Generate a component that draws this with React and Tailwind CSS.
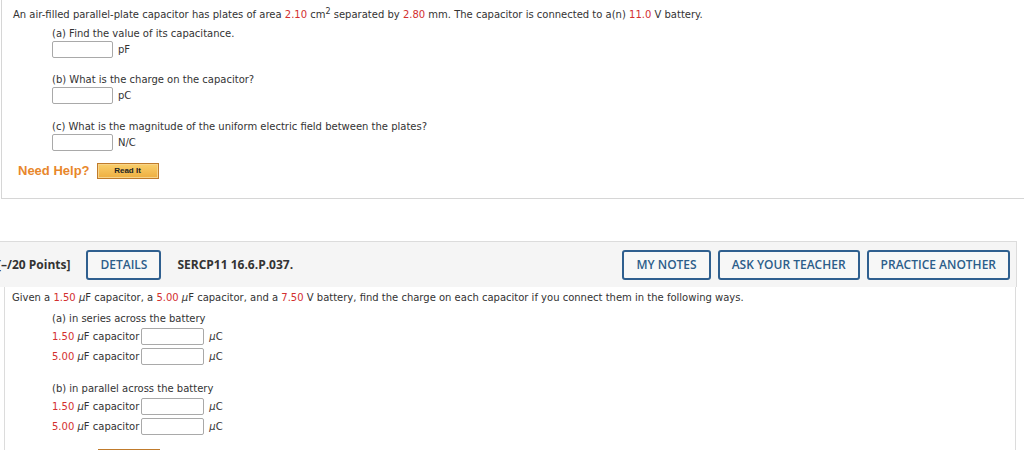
const red = "text-[#d32f2f]";

function Box({ w = "w-[61px]" }) {
  return <span className={`inline-block ${w} h-[17px] border border-[#a9a9a9] rounded-[2px] bg-white align-middle`} />;
}

function Answer({ unit }) {
  return (
    <div className="flex items-center gap-[5px] h-[17px]">
      <Box />
      <span>{unit}</span>
    </div>
  );
}

function CapRow({ value }) {
  return (
    <div className="flex items-center h-[17px]">
      <span className={red}>{value}</span>
      <span>&nbsp;<i>μ</i>F capacitor</span>
      <span className="ml-[2px]"><Box w="w-[63px]" /></span>
      <span className="ml-[5px]"><i>μ</i>C</span>
    </div>
  );
}

function HeadButton({ children }) {
  return (
    <button className="h-[30px] px-[12px] border-2 border-[#2f5f8f] rounded-[3px] text-[#2c5d8a] font-semibold text-[12px] bg-[#f7f7f7] leading-none">
      {children}
    </button>
  );
}

export default function App() {
  const body = "font-['DejaVu_Sans',Verdana,sans-serif] text-[10px] text-[#333]";
  return (
    <div className="w-[1024px] h-[450px] overflow-hidden bg-white relative">
      <section className={`ml-[1px] h-[199px] border-l border-b border-[#d6d6d6] ${body}`}>
        <p className="pt-[9px] pl-[11px] leading-[12px]">
          An air-filled parallel-plate capacitor has plates of area <span className={red}>2.10</span> cm<sup className="text-[8px]">2</sup> separated by <span className={red}>2.80</span> mm. The capacitor is connected to a(n) <span className={red}>11.0</span> V battery.
        </p>
        <div className="pl-[50px]">
          <p className="mt-[7px] leading-[12px]">(a) Find the value of its capacitance.</p>
          <div className="mt-[1px]"><Answer unit="pF" /></div>
          <p className="mt-[16px] leading-[12px]">(b) What is the charge on the capacitor?</p>
          <div className="mt-[1px]"><Answer unit="pC" /></div>
          <p className="mt-[17px] leading-[12px]">(c) What is the magnitude of the uniform electric field between the plates?</p>
          <div className="mt-[1px]"><Answer unit="N/C" /></div>
        </div>
        <div className="flex items-center mt-[10px] pl-[16px]">
          <span className="font-['Liberation_Sans',Arial,sans-serif] font-bold text-[13px] text-[#e8872b]">Need Help?</span>
          <span className="ml-[7px] w-[62px] h-[16px] border border-[#c07b2c] bg-gradient-to-b from-[#f9cf6b] to-[#eeae3f] flex items-center justify-center font-['Liberation_Sans',Arial,sans-serif] font-bold text-[8px] text-[#222] shadow-[inset_0_0_0_1px_#f7d48a]">
            Read It
          </span>
        </div>
      </section>

      <div className="mt-[42px] w-[1017px] font-['Open_Sans',sans-serif]">
        <div className="h-[46px] bg-[#f5f5f5] border-t border-r border-[#dcdcdc] flex items-center">
          <span className="-ml-[3px] font-bold text-[12px] text-[#333]">[–/20 Points]</span>
          <span className="ml-[16px]"><HeadButton>DETAILS</HeadButton></span>
          <span className="ml-[16px] font-bold text-[12px] text-[#333]">SERCP11 16.6.P.037.</span>
          <div className="ml-auto mr-[6px] flex gap-[7px]">
            <HeadButton>MY NOTES</HeadButton>
            <HeadButton>ASK YOUR TEACHER</HeadButton>
            <HeadButton>PRACTICE ANOTHER</HeadButton>
          </div>
        </div>
        <div className={`ml-[4px] mr-[1px] h-[200px] border-l border-r border-[#dcdcdc] ${body}`}>
          <p className="pt-[5px] pl-[7px] leading-[12px]">
            Given a <span className={red}>1.50</span> <i>μ</i>F capacitor, a <span className={red}>5.00</span> <i>μ</i>F capacitor, and a <span className={red}>7.50</span> V battery, find the charge on each capacitor if you connect them in the following ways.
          </p>
          <div className="pl-[47px]">
            <p className="mt-[9px] leading-[12px]">(a) in series across the battery</p>
            <div className="mt-[3px] flex flex-col gap-[3px]">
              <CapRow value="1.50" />
              <CapRow value="5.00" />
            </div>
            <p className="mt-[18px] leading-[12px]">(b) in parallel across the battery</p>
            <div className="mt-[3px] flex flex-col gap-[3px]">
              <CapRow value="1.50" />
              <CapRow value="5.00" />
            </div>
            <div className="mt-[14px] ml-[46px] w-[62px] h-[6px] border-t-2 border-[#c07b2c] bg-[#f0b445]" />
          </div>
        </div>
      </div>
    </div>
  );
}
